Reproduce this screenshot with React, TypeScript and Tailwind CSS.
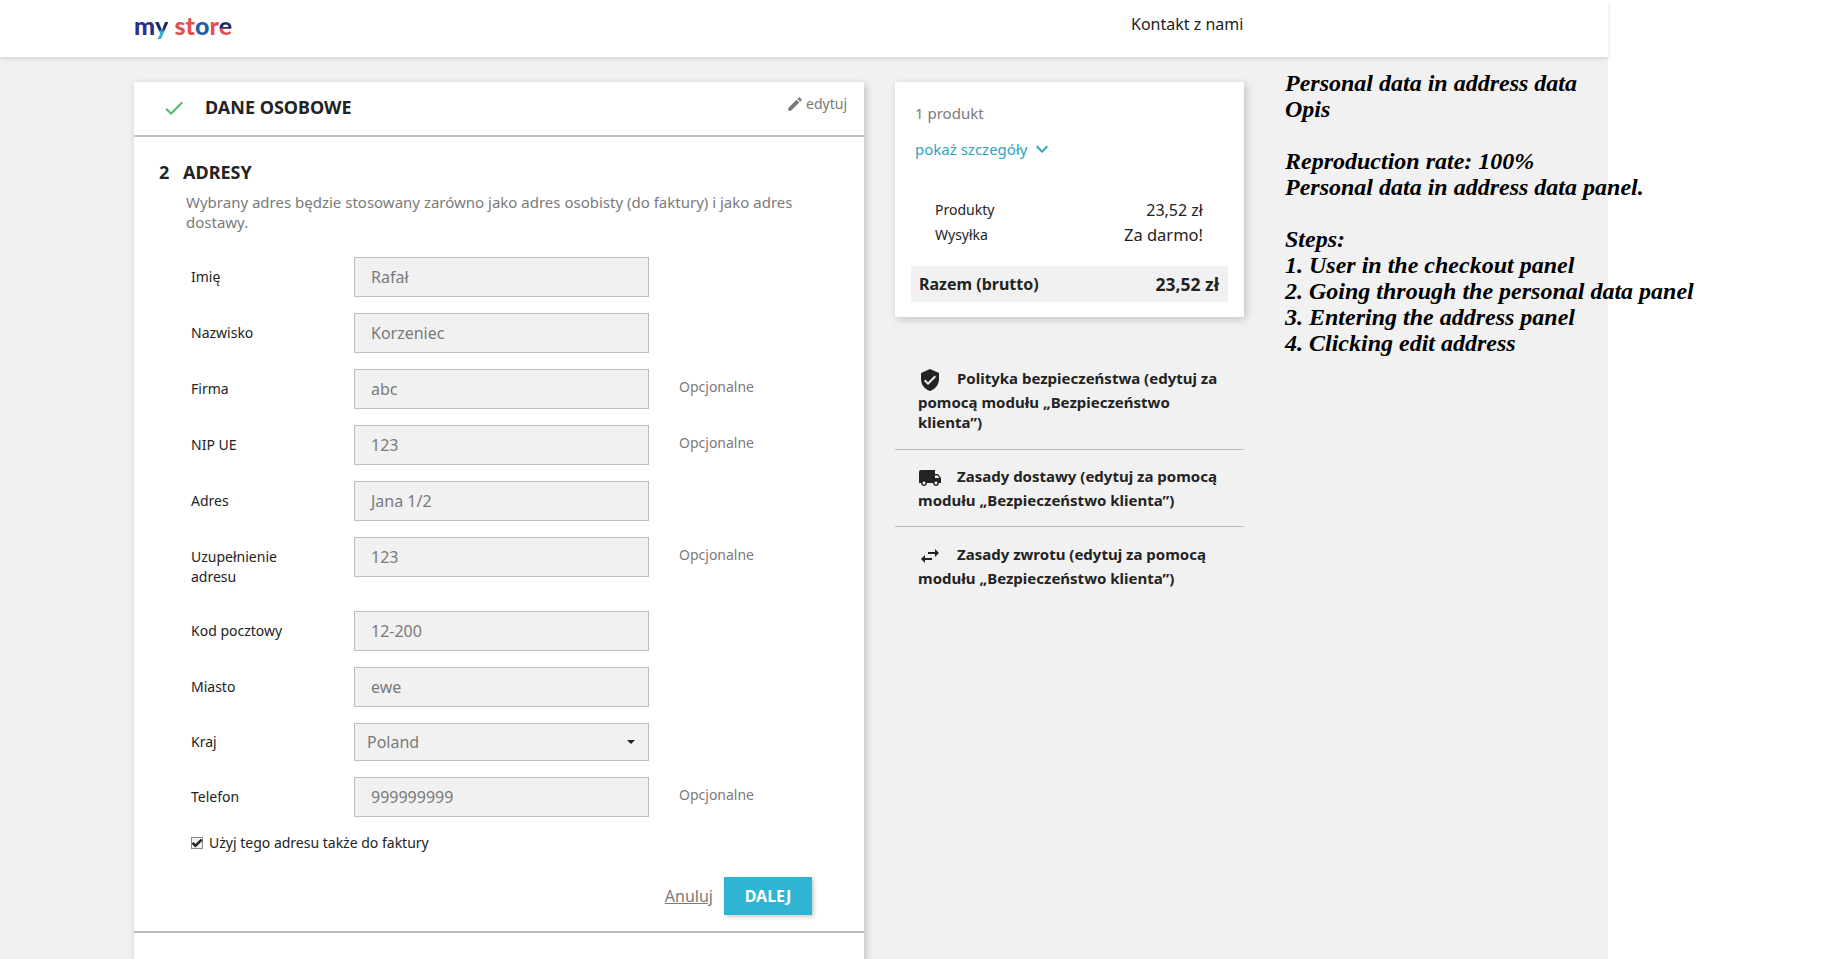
const FIELDS = [
  { label: "Imię", value: "Rafał" },
  { label: "Nazwisko", value: "Korzeniec" },
  { label: "Firma", value: "abc", optional: true },
  { label: "NIP UE", value: "123", optional: true },
  { label: "Adres", value: "Jana 1/2" },
  { label: "Uzupełnienie adresu", value: "123", optional: true, tall: true },
  { label: "Kod pocztowy", value: "12-200" },
  { label: "Miasto", value: "ewe" },
];

const NOTES = [
  "Personal data in address data",
  "Opis",
  "",
  "Reproduction rate: 100%",
  "Personal data in address data panel.",
  "",
  "Steps:",
  "1. User in the checkout panel",
  "2. Going through the personal data panel",
  "3. Entering the address panel",
  "4. Clicking edit address",
];

function Icon({ d, className }: { d: string; className: string }) {
  return (
    <svg viewBox="0 0 24 24" fill="currentColor" className={className}>
      <path d={d} />
    </svg>
  );
}

function Logo() {
  return (
    <div className="flex text-[25px] font-black leading-none font-['Lato','Noto_Sans',sans-serif]">
      <span className="text-[#2a2f85]">m</span>
      <span className="bg-linear-to-b from-[#1b2a6b] from-55% to-[#2fb5d2] to-65% bg-clip-text pb-1 text-transparent">y</span>
      <span className="w-[6px]" />
      <span className="text-[#e0524f]">s</span>
      <span className="text-[#e0524f]">t</span>
      <span className="text-[#1f5fa8]">o</span>
      <span className="text-[#e0524f]">r</span>
      <span className="bg-linear-to-b from-[#1b2a6b] from-50% to-[#e0524f] to-55% bg-clip-text pb-1 text-transparent">e</span>
    </div>
  );
}

function Field({ label, value, optional, tall }: { label: string; value: string; optional?: boolean; tall?: boolean }) {
  return (
    <div className={`flex items-start ${tall ? "h-[58px] mb-4" : "h-10 mb-4"}`}>
      <label className="w-[163px] pr-8 pt-[10px] text-sm leading-5 text-[#232323]">{label}</label>
      <div className="flex h-10 w-[295px] items-center border border-[#bdbdbd] bg-[#f1f1f1] px-4 text-base text-[#7a7a7a]">{value}</div>
      {optional && <span className="ml-[30px] pt-[8px] text-sm leading-5 text-[#7a7a7a]">Opcjonalne</span>}
    </div>
  );
}

function Reassurance({ d, text, className }: { d: string; text: string; className: string }) {
  return (
    <div className={`pl-[23px] pr-6 text-[15px] font-bold leading-5 text-[#232323] ${className}`}>
      <Icon d={d} className="mr-[15px] inline-block h-6 w-6 align-middle" />
      {text}
    </div>
  );
}

export default function App() {
  return (
    <div className="h-[959px] w-[1832px] overflow-hidden bg-white font-['Noto_Sans',sans-serif]">
      <div className="h-full w-[1608px] bg-[#f1f1f1]">
        <header className="relative z-10 flex h-[57px] items-start bg-white pl-[134px] shadow-[0_2px_4px_rgba(0,0,0,0.12)]">
          <div className="w-[997px] pt-[13px]"><Logo /></div>
          <a className="pt-[12px] text-base leading-6 text-[#232323]">Kontakt z nami</a>
        </header>

        <main className="flex items-start pl-[134px] pt-[25px]">
          <section className="w-[730px] shrink-0 bg-white shadow-[2px_2px_8px_rgba(0,0,0,0.2)]">
            <div className="flex h-[55px] items-start border-b-2 border-[#bdbdbd] pl-[28px] pr-[17px]">
              <Icon d="M9 16.17L4.83 12l-1.42 1.41L9 19 21 7l-1.41-1.41z" className="mt-[14px] h-6 w-6 text-[#4cbb6c]" />
              <h1 className="ml-[19px] mt-[11px] flex-1 text-lg font-bold uppercase leading-7 text-[#232323]">Dane osobowe</h1>
              <a className="mt-[12px] flex items-center text-sm leading-5 text-[#7a7a7a]">
                <Icon d="M3 17.25V21h3.75L17.81 9.94l-3.75-3.75L3 17.25zM20.71 7.04c.39-.39.39-1.02 0-1.41l-2.34-2.34c-.39-.39-1.02-.39-1.41 0l-1.83 1.83 3.75 3.75 1.83-1.83z" className="mr-[2px] h-[18px] w-[18px]" />
                edytuj
              </a>
            </div>

            <div className="border-b-2 border-[#bdbdbd] pb-[16px] pl-[25px] pr-[52px] pt-[21px]">
              <h2 className="flex text-lg font-bold uppercase leading-7 text-[#232323]">
                <span className="w-[24px]">2</span>Adresy
              </h2>
              <p className="ml-[27px] mt-[6px] text-[15px] leading-5 text-[#7a7a7a]">
                Wybrany adres będzie stosowany zarówno jako adres osobisty (do faktury) i jako adres dostawy.
              </p>
              <form className="ml-[32px] mt-[25px]">
                {FIELDS.map((f) => <Field key={f.label} {...f} />)}
                <div className="mb-4 flex h-[38px] items-start">
                  <label className="w-[163px] pt-[9px] text-sm leading-5 text-[#232323]">Kraj</label>
                  <div className="flex h-[38px] w-[295px] items-center justify-between border border-[#bdbdbd] bg-[#f1f1f1] pl-3 pr-[13px] text-base text-[#7a7a7a]">
                    Poland
                    <span className="h-0 w-0 border-x-4 border-t-[4px] border-x-transparent border-t-[#232323]" />
                  </div>
                </div>
                <Field label="Telefon" value="999999999" optional />
                <label className="mt-[1px] flex items-center text-sm leading-5 text-[#232323]">
                  <span className="mr-[6px] flex h-3 w-3 items-center justify-center border border-[#8a8a8a] bg-[#f1f1f1]">
                    <Icon d="M9 16.17L4.83 12l-1.42 1.41L9 19 21 7l-1.41-1.41z" className="h-3 w-3 shrink-0 stroke-[#232323] stroke-[3px] text-[#232323]" />
                  </span>
                  Użyj tego adresu także do faktury
                </label>
                <div className="mt-[24px] flex items-center justify-end gap-[11px]">
                  <a className="text-base leading-6 text-[#7a7a7a] underline">Anuluj</a>
                  <button type="button" className="flex h-[38px] w-[88px] items-center justify-center bg-[#2fb5d2] text-base font-bold uppercase text-white shadow-[2px_2px_4px_rgba(0,0,0,0.2)]">Dalej</button>
                </div>
              </form>
            </div>

            <div className="pl-[25px] pt-[22px]">
              <h2 className="flex text-lg font-bold uppercase leading-7 text-[#232323]">
                <span className="w-[24px]">3</span>Sposób dostawy
              </h2>
            </div>
          </section>

          <aside className="ml-[31px] w-[349px] shrink-0">
            <div className="h-[235px] bg-white pt-[21px] shadow-[2px_2px_8px_rgba(0,0,0,0.2)]">
              <p className="pl-[20px] text-[15px] leading-5 text-[#7a7a7a]">1 produkt</p>
              <a className="mt-[14px] flex items-center pl-[20px] text-[15px] leading-5 text-[#2fa5bd]">
                pokaż szczegóły
                <Icon d="M16.59 8.59L12 13.17 7.41 8.59 6 10l6 6 6-6z" className="ml-[3px] h-6 w-6" />
              </a>
              <div className="mt-[37px] flex items-center justify-between pl-[40px] pr-[41px] text-sm leading-5 text-[#232323]">
                <span>Produkty</span><span className="text-base">23,52 zł</span>
              </div>
              <div className="mt-[3px] flex items-center justify-between pl-[40px] pr-[41px] text-sm leading-5 text-[#232323]">
                <span>Wysyłka</span><span className="text-[16.5px]">Za darmo!</span>
              </div>
              <div className="mx-4 mt-[21px] flex h-9 items-center justify-between bg-[#f1f1f1] pl-2 pr-[9px] text-base font-bold text-[#232323]">
                <span>Razem (brutto)</span><span className="text-[17.5px]">23,52 zł</span>
              </div>
            </div>
            <div className="mt-[36px]">
              <Reassurance className="border-b border-[#bdbdbd] pb-[17px] pt-[15px]" d="M12 1L3 5v6c0 5.55 3.84 10.74 9 12 5.16-1.26 9-6.45 9-12V5l-9-4zm-2 16l-4-4 1.41-1.41L10 14.17l6.59-6.59L18 9l-8 8z" text="Polityka bezpieczeństwa (edytuj za pomocą modułu „Bezpieczeństwo klienta”)" />
              <Reassurance className="border-b border-[#bdbdbd] pb-4 pt-4" d="M20 8h-3V4H3c-1.1 0-2 .9-2 2v11h2c0 1.66 1.34 3 3 3s3-1.34 3-3h6c0 1.66 1.34 3 3 3s3-1.34 3-3h2v-5l-3-4zM6 18.5c-.83 0-1.5-.67-1.5-1.5s.67-1.5 1.5-1.5 1.5.67 1.5 1.5-.67 1.5-1.5 1.5zm13.5-9l1.96 2.5H17V9.5h2.5zm-1.5 9c-.83 0-1.5-.67-1.5-1.5s.67-1.5 1.5-1.5 1.5.67 1.5 1.5-.67 1.5-1.5 1.5z" text="Zasady dostawy (edytuj za pomocą modułu „Bezpieczeństwo klienta”)" />
              <Reassurance className="pb-4 pt-[17px]" d="M6.99 11L3 15l3.99 4v-3H14v-2H6.99v-3zM21 9l-3.99-4v3H10v2h7.01v3L21 9z" text="Zasady zwrotu (edytuj za pomocą modułu „Bezpieczeństwo klienta”)" />
            </div>
          </aside>

          <div className="-mt-3 ml-[41px] shrink-0 whitespace-nowrap font-['Liberation_Serif',serif] text-2xl font-bold italic leading-[26px] text-black">
            {NOTES.map((line, i) => <div key={i} className="h-[26px]">{line}</div>)}
          </div>
        </main>
      </div>
    </div>
  );
}
